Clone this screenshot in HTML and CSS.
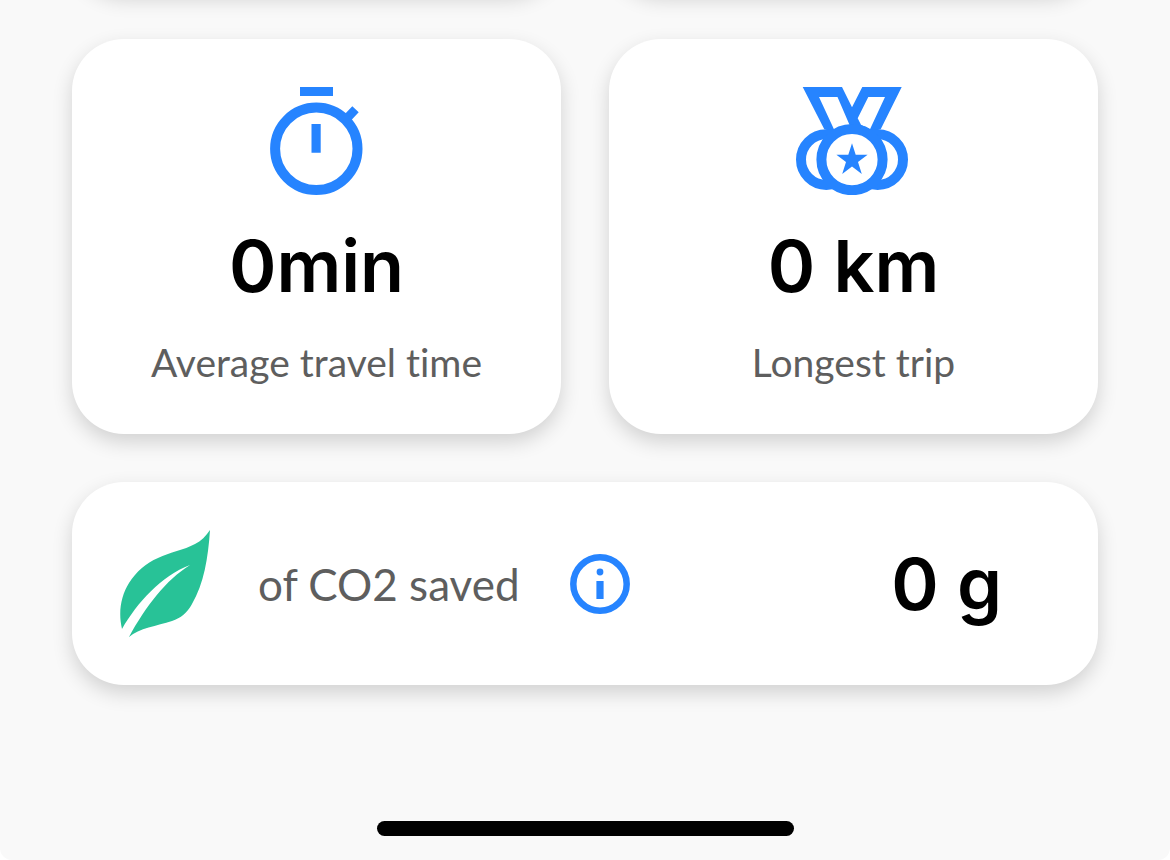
FILE: index.html
```
<!DOCTYPE html>
<html lang="en">
  <head>
    <meta charset="UTF-8" />
    <meta name="viewport" content="width=device-width, initial-scale=1.0" />
    <title>Trip statistics</title>
    <link rel="stylesheet" href="styles.css">
  </head>
  <body>
    <div class="screen">
      <main class="stats">
        <!-- previous row, scrolled out of view -->
        <div class="card card-scrolled"></div>
        <div class="card card-scrolled"></div>

        <section class="card stat">
          <svg class="stat-icon" viewBox="0 0 93 108" aria-hidden="true">
            <path class="fill" d="M30 0h33v9H30zM41.5 37h9.2v28.7h-9.2zM82.3 19.3l6.4 6L80 34.5 73 29z" />
            <circle class="ring" cx="46.3" cy="61.8" r="41.2" />
          </svg>
          <h2 class="value">0min</h2>
          <p class="label">Average travel time</p>
        </section>

        <section class="card stat">
          <svg class="stat-icon" viewBox="0 0 116 108" aria-hidden="true">
            <path class="fill" fill-rule="evenodd" d="M6.7 0H46l10 20.3L66.3 0h39.4l-21 42.3L56 50 28.3 42.3zM23 10l15.3 33L54 39 41.5 10zM72.3 10L61.7 31.3l3.3 6.500 9 4.500L89 10z" />
            <circle class="ring" cx="30.3" cy="72.6" r="25.3" />
            <circle class="ring" cx="81.7" cy="72.6" r="25.3" />
            <circle class="ring disc" cx="56" cy="72.6" r="30.6" />
            <path class="fill" d="M56 56.3l3.7 11.5h11.9l-9.6 7.1 3.8 12-9.8-7.3-9.8 7.3 3.8-12-9.6-7.1h11.9z" />
          </svg>
          <h2 class="value">0 km</h2>
          <p class="label">Longest trip</p>
        </section>

        <section class="card saved">
          <svg class="leaf" viewBox="0 0 90 107" aria-hidden="true">
            <path d="M90 0C86 6 81 11 75 14 64 20 50 22 38 28 26 33 16 42 9 53 1 66-2 82 2 99 17 73 41 46 70 35 46 50 26 76 9 107 19 98 37 96 52 91 61 88 67 83 72 74 84 53 88 29 90 0z" />
          </svg>
          <p class="saved-label">of CO2 saved</p>
          <button class="info" type="button" aria-label="About CO2 savings">
            <svg viewBox="0 0 60 60" aria-hidden="true">
              <circle class="ring info-ring" cx="30" cy="30" r="26.7" />
              <circle class="fill" cx="30" cy="18" r="3.4" />
              <path class="fill" d="M26.4 27h7.2v18h-7.2z" />
            </svg>
          </button>
          <h2 class="value saved-value">0 g</h2>
        </section>
      </main>

      <div class="home-indicator"></div>
    </div>
  </body>
</html>
```
FILE: styles.css
```
* {
  margin: 0;
  padding: 0;
  box-sizing: border-box;
}

body {
  font-family: Lato, "Open Sans", sans-serif;
  font-variant-ligatures: none;
  background: #fff;
  color: #000;
}

.screen {
  display: flex;
  flex-direction: column;
  min-height: 100vh;
  padding: 0 72px 24px;
  background: #f9f9f9;
  border-radius: 0 0 12px 12px;
  overflow: hidden;
}

.stats {
  display: grid;
  grid-template-columns: 1fr 1fr;
  gap: 48px;
  margin-top: -209px;
}

.card {
  background: #fff;
  border-radius: 52px;
  box-shadow: 0 8px 20px rgba(0, 0, 0, 0.16);
}

.card-scrolled {
  height: 200px;
}

.stat {
  display: flex;
  flex-direction: column;
  align-items: center;
  padding: 48px 24px;
}

.stat-icon {
  height: 108px;
}

.fill {
  fill: #2684ff;
}

.ring {
  fill: none;
  stroke: #2684ff;
  stroke-width: 10;
}

.disc {
  fill: #fff;
}

.value {
  font-family: Inter, Lato, sans-serif;
  font-size: 72px;
  line-height: 88px;
  font-weight: 600;
}

.stat .value {
  margin-top: 27px;
}

.label {
  margin-top: 28px;
  font-size: 39px;
  line-height: 48px;
  color: #5e5e5e;
}

.saved {
  grid-column: 1 / -1;
  display: flex;
  align-items: center;
  padding: 48px 96px 48px 48px;
}

.leaf {
  width: 90px;
  height: 107px;
  fill: #28c297;
}

.saved-label {
  margin-left: 48px;
  font-size: 44px;
  line-height: 54px;
  color: #5e5e5e;
}

.info {
  width: 60px;
  height: 60px;
  margin-left: 50px;
  border: none;
  background: none;
  cursor: pointer;
}

.info svg {
  display: block;
}

.info-ring {
  stroke-width: 6.5;
}

.saved-value {
  margin-left: auto;
}

.home-indicator {
  align-self: center;
  width: 417px;
  max-width: 60%;
  height: 15px;
  margin-top: auto;
  border-radius: 8px;
  background: #000;
}
```
